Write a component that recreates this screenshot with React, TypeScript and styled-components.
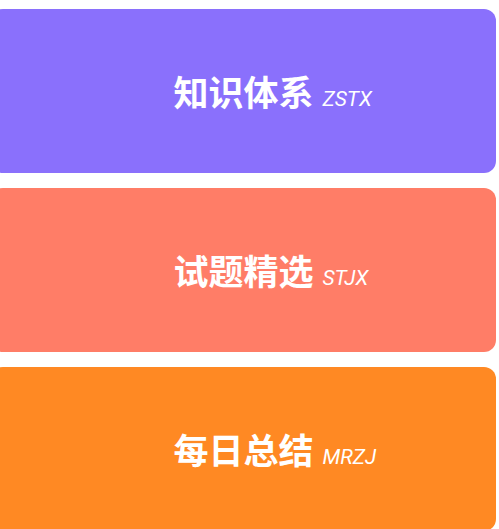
import React from 'react';
import styled, {createGlobalStyle} from 'styled-components';

const Global = createGlobalStyle`
	* {
		box-sizing: border-box;
		margin: 0;
	}
	body {
		background: #ffffff;
		font-family: 'Noto Sans CJK SC', 'Noto Sans', sans-serif;
		overflow: hidden;
	}
`;

const List = styled.div`
	display: flex;
	flex-direction: column;
	gap: 15px;
	padding-top: 9px;
	margin-left: -9px;
	width: 505px;
`;

const Card = styled.div<{$bg: string}>`
	height: 164px;
	border-radius: 12px;
	background: ${p => p.$bg};
	display: grid;
	grid-template-columns: 1fr auto 1fr;
	align-content: center;
	align-items: baseline;
	color: #ffffff;
`;

const Title = styled.span`
	grid-column: 2;
	font-family: 'Noto Sans CJK SC', sans-serif;
	font-size: 35px;
	font-weight: 700;
	line-height: 1.2;
`;

const Code = styled.span`
	grid-column: 3;
	margin-left: 9px;
	font-family: Roboto, 'Liberation Sans', sans-serif;
	font-style: italic;
	font-size: 21px;
	font-weight: 400;
`;

const items = [
	{title: '知识体系', code: 'ZSTX', bg: '#8a70fc'},
	{title: '试题精选', code: 'STJX', bg: '#ff7d67'},
	{title: '每日总结', code: 'MRZJ', bg: '#ff8923'},
];

export default function App() {
	return (
		<>
			<Global />
			<List>
				{items.map(item => (
					<Card key={item.code} $bg={item.bg}>
						<Title>{item.title}</Title>
						<Code>{item.code}</Code>
					</Card>
				))}
			</List>
		</>
	);
}
